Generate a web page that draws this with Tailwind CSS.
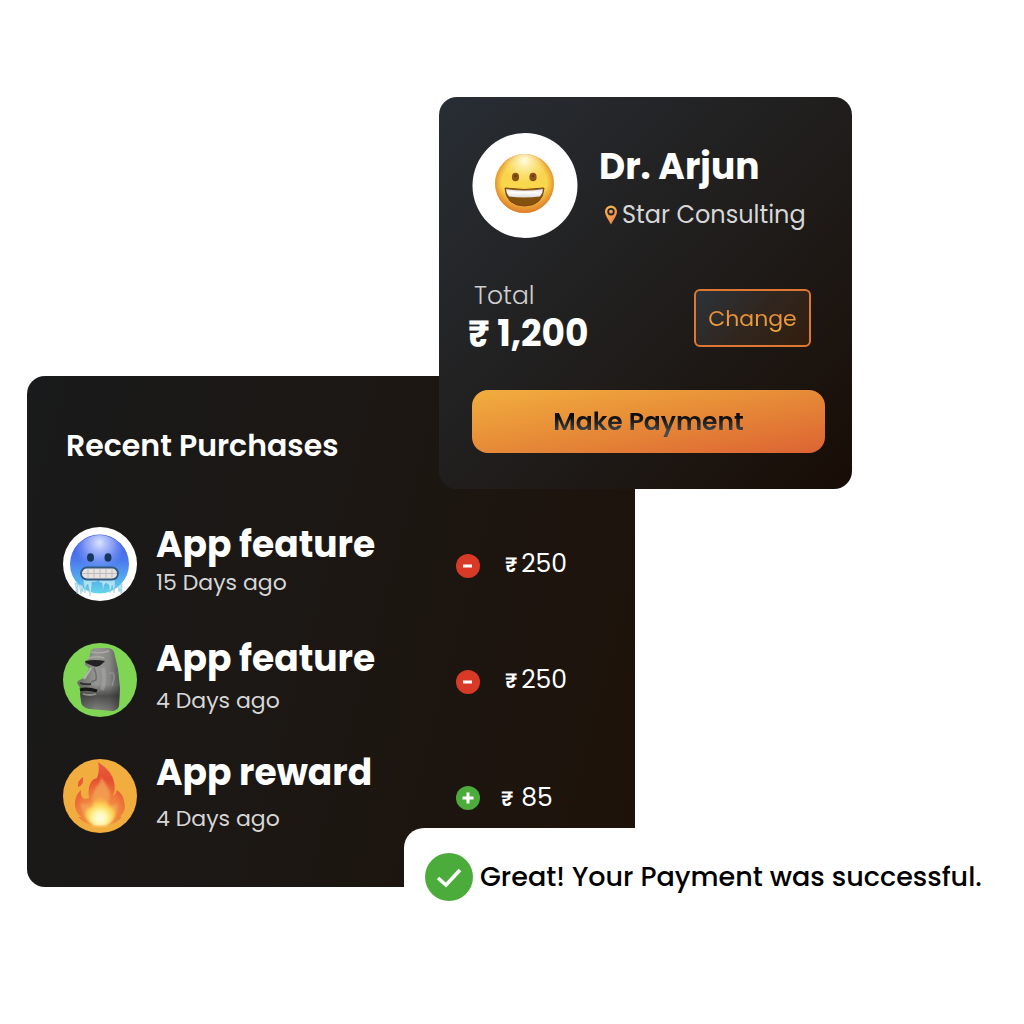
<!DOCTYPE html>
<html lang="en">
<head>
<meta charset="utf-8">
<meta name="viewport" content="width=device-width, initial-scale=1">
<title>Payments</title>
<script src="https://cdn.jsdelivr.net/npm/@tailwindcss/browser@4"></script>
</head>
<body class="min-h-screen bg-white font-[Poppins,Inter,sans-serif] text-white antialiased">
<main class="grid grid-cols-[minmax(0,27fr)_minmax(0,377fr)_minmax(0,35fr)_minmax(0,196fr)_minmax(0,217fr)_minmax(0,172fr)] grid-rows-[minmax(279px,auto)_minmax(113px,auto)_minmax(339px,auto)_minmax(59px,auto)_auto] pt-[97px]">

  <!-- Purchase history -->
  <section aria-labelledby="recent" class="col-start-2 col-end-5 row-start-2 row-end-5 rounded-l-[18px] bg-linear-105 from-[#191a1b] via-[#1c1713] to-[#1d1209] pt-12 pl-9">
    <h2 id="recent" class="pl-[3px] text-[30px] leading-[44px] font-semibold">Recent Purchases</h2>
    <ul class="mt-[53px] flex flex-col gap-[30px]">
      <li class="flex min-h-[86px] items-center">
        <svg class="size-[74px] shrink-0" viewBox="0 0 74 74" role="img" aria-label="Cold face">
          <defs>
            <linearGradient id="cold" x1="0" y1="0" x2="0" y2="1"><stop offset="0" stop-color="#3c53e2"/><stop offset=".45" stop-color="#4c7bee"/><stop offset=".8" stop-color="#55b4ee"/><stop offset="1" stop-color="#62d9ea"/></linearGradient>
            <radialGradient id="coldShine" cx=".5" cy=".14" r=".48"><stop offset="0" stop-color="#dce4ff"/><stop offset=".5" stop-color="#a3b4fa" stop-opacity=".75"/><stop offset="1" stop-color="#7896f7" stop-opacity="0"/></radialGradient>
            <linearGradient id="ice" x1="0" y1="0" x2="0" y2="1"><stop offset="0" stop-color="#9cdcf1"/><stop offset="1" stop-color="#dff4fb"/></linearGradient>
          </defs>
          <circle cx="37" cy="37" r="37" fill="#fff"/>
          <circle cx="36.500" cy="37" r="29.500" fill="url(#cold)"/>
          <circle cx="36.500" cy="36" r="28" fill="url(#coldShine)"/>
          <ellipse cx="27.500" cy="30.500" rx="3.500" ry="4.300" fill="#17375f"/>
          <ellipse cx="45" cy="30.500" rx="3.500" ry="4.300" fill="#17375f"/>
          <path d="M12 56l3 0 0 8-1 3zM16 57l4 2 0 6-1-3-1 5zM55 59l4-2 0 7-1 3-1-5-1 3z" fill="#b9e3f0" stroke="#6fb7d0" stroke-width=".4"/>
          <path d="M20 52h16q-1 3-4 3l-3 0-1 10-1 4-1-7-1-5-2 2-1 7-1-8zM35 52h17l0 6-1 8-1-6-1-2-2 8-1-8-3-2-2 2-1 7-1-9-3-1z" fill="url(#ice)" stroke="#69b4d2" stroke-width=".4"/>
          <rect x="18" y="40.500" width="37" height="12" rx="6" fill="#e7e3e1" stroke="#33567d" stroke-width="1.800"/>
          <path d="M19 46.500h35M25 41.500v10M31 41.500v10M37 41.500v10M43 41.500v10M49 41.500v10" stroke="#b5b1b5" stroke-width=".8"/>
        </svg>
        <div class="flex w-[300px] flex-col gap-2 pb-1.5 pl-[19px]">
          <h3 class="text-4xl leading-9 font-bold">App feature</h3>
          <p class="text-[22px] leading-6 text-[#d6d6d6]">15 Days ago</p>
        </div>
        <svg class="mt-1 ml-[19px] size-6 shrink-0" viewBox="0 0 24 24" role="img" aria-label="Debit"><circle cx="12" cy="12" r="12" fill="#d93a27"/><path d="M7 12h9" stroke="#fff" stroke-width="3"/></svg>
        <p class="ml-[25px] flex items-baseline gap-1 text-[25px] whitespace-nowrap"><span class="text-xl font-semibold">₹</span>250</p>
      </li>
      <li class="flex min-h-[86px] items-center">
        <svg class="size-[74px] shrink-0" viewBox="0 0 74 74" role="img" aria-label="Moai statue">
          <defs>
            <linearGradient id="stone" x1="0" y1="0" x2="1" y2="0"><stop offset="0" stop-color="#6b6b65"/><stop offset=".45" stop-color="#969692"/><stop offset=".75" stop-color="#868683"/><stop offset="1" stop-color="#535454"/></linearGradient>
            <linearGradient id="stoneShade" x1="0" y1="0" x2="0" y2="1"><stop offset=".58" stop-color="#222" stop-opacity="0"/><stop offset=".76" stop-color="#222" stop-opacity=".6"/><stop offset="1" stop-color="#222" stop-opacity=".15"/></linearGradient>
            <filter id="soft"><feGaussianBlur stdDeviation=".7"/></filter>
          </defs>
          <circle cx="37" cy="37" r="37" fill="#80d554"/>
          <path d="M28 7Q30 5 34 5L46 5Q50 6 51 9L55 26 57 45 56 63Q55 67 50 68L26 66Q18 64 18 58L17 50 18 46 16 43 14 40 15 38 22 34 26 25 22 22 22 19 26 16Z" fill="url(#stone)"/>
          <path d="M28 7Q30 5 34 5L46 5Q50 6 51 9L55 26 57 45 56 63Q55 67 50 68L26 66Q18 64 18 58L17 50 18 46 16 43 14 40 15 38 22 34 26 25 22 22 22 19 26 16Z" fill="url(#stoneShade)"/>
          <g filter="url(#soft)" fill="none">
            <path d="M22 18Q32 16 42 18L39 21Q35 25 30 23L23 20Z" fill="#222424"/>
            <path d="M28 9Q38 11 46 8M24 16Q33 12 41 15" stroke="#aaa9a3" stroke-width="1.500"/>
            <path d="M28 25L21 36" stroke="#b1b4b2" stroke-width="2"/>
            <path d="M31 25Q34 32 33 37L28 39" stroke="#6c6e6d" stroke-width="1.500"/>
            <path d="M17 40Q21 42 28 41" stroke="#303231" stroke-width="2"/>
            <path d="M17 47Q24 45 34 48" stroke="#151818" stroke-width="3.200"/>
            <path d="M20 51Q27 53 33 51" stroke="#8f8f8a" stroke-width="1.800"/>
            <path d="M46 31Q52 27 51 36L49 43" stroke="#a0a3a3" stroke-width="1.200" opacity=".7"/>
            <path d="M40 25Q43 38 39 47" stroke="#b0b0ab" stroke-width="4" opacity=".45"/>
          </g>
        </svg>
        <div class="flex w-[300px] flex-col gap-3 pb-1.5 pl-[19px]">
          <h3 class="text-4xl leading-9 font-bold">App feature</h3>
          <p class="text-[22px] leading-6 text-[#d6d6d6]">4 Days ago</p>
        </div>
        <svg class="mt-1 ml-[19px] size-6 shrink-0" viewBox="0 0 24 24" role="img" aria-label="Debit"><circle cx="12" cy="12" r="12" fill="#d93a27"/><path d="M7 12h9" stroke="#fff" stroke-width="3"/></svg>
        <p class="ml-[25px] flex items-baseline gap-1 text-[25px] whitespace-nowrap"><span class="text-xl font-semibold">₹</span>250</p>
      </li>
      <li class="flex min-h-[86px] items-center">
        <svg class="size-[74px] shrink-0" viewBox="0 0 74 74" role="img" aria-label="Fire">
          <defs>
            <radialGradient id="fire" gradientUnits="userSpaceOnUse" cx="37" cy="57" r="50"><stop offset="0" stop-color="#f6a23c"/><stop offset=".45" stop-color="#ef7c3d"/><stop offset=".75" stop-color="#e54d31"/><stop offset="1" stop-color="#ea5940"/></radialGradient>
            <radialGradient id="glow" gradientUnits="userSpaceOnUse" cx="37" cy="59" r="23"><stop offset="0" stop-color="#fffef0"/><stop offset=".3" stop-color="#fff6a6"/><stop offset=".6" stop-color="#ffd84f" stop-opacity=".85"/><stop offset="1" stop-color="#f7a03c" stop-opacity="0"/></radialGradient>
            <filter id="flameSoft"><feGaussianBlur stdDeviation="1.200"/></filter>
          </defs>
          <circle cx="37" cy="37" r="37" fill="#f1ae3f"/>
          <path d="M20 18Q14 22 15 28Q20 26 20 22Z" fill="#e95b37"/>
          <path d="M35 3Q49 12 51 23Q53 31 50 37Q53 35 54 31Q60 35 61 42Q64 51 57 58L59 58Q54 64 43 67L31 67Q20 64 15 58L18 58Q11 52 12 43Q13 35 18 31Q17 37 21 40L26 39Q25 34 26 28Q28 20 34 19Q37 11 35 3Z" fill="url(#fire)"/>
          <path d="M38 18Q43 25 46 31Q48 38 45 44Q48 48 54 44Q56 51 52 58Q46 66 37 66Q26 65 21 57Q18 50 18 44Q23 46 29 44Q29 35 34 27Q38 24 38 18Z" fill="#f3a257" opacity=".8" filter="url(#flameSoft)"/>
          <path d="M37 34Q42 39 46 47L52 49Q54 61 43 67L31 67Q20 60 23 50L29 48Q31 41 37 34Z" fill="url(#glow)" filter="url(#flameSoft)"/>
        </svg>
        <div class="flex w-[300px] flex-col gap-4 pb-1.5 pl-[19px]">
          <h3 class="text-4xl leading-9 font-bold">App reward</h3>
          <p class="text-[22px] leading-6 text-[#d6d6d6]">4 Days ago</p>
        </div>
        <svg class="mt-1 ml-[19px] size-6 shrink-0" viewBox="0 0 24 24" role="img" aria-label="Credit"><circle cx="12" cy="12" r="12" fill="#4cac3b"/><path d="M6.500 12h11M12 6.500v11" stroke="#fff" stroke-width="3"/></svg>
        <p class="ml-[21px] flex items-baseline gap-2 pt-1 text-[25px] whitespace-nowrap"><span class="text-xl font-semibold">₹</span>85</p>
      </li>
    </ul>
  </section>

  <!-- Payment card -->
  <section aria-label="Payment" class="z-10 col-start-4 col-end-6 row-start-1 row-end-3 flex flex-col rounded-[18px] bg-linear-135 from-[#282e35] via-[#201e1d] via-50% to-[#180d06] pt-9 pr-[27px] pb-9 pl-[33px]">
    <header class="flex items-start gap-[21px]">
      <svg class="size-[106px] shrink-0" viewBox="0 0 106 106" role="img" aria-label="Grinning face">
        <defs>
          <linearGradient id="sun" x1="0" y1="0" x2="0" y2="1"><stop offset="0" stop-color="#f6cd4c"/><stop offset=".55" stop-color="#f9d84c"/><stop offset="1" stop-color="#e69532"/></linearGradient>
          <radialGradient id="sunEdge" cx=".5" cy=".48" r=".52"><stop offset=".72" stop-color="#e78f2d" stop-opacity="0"/><stop offset="1" stop-color="#dd7b28" stop-opacity=".9"/></radialGradient>
          <radialGradient id="sunShine" cx=".5" cy=".12" r=".42"><stop offset="0" stop-color="#fffde0"/><stop offset="1" stop-color="#fff29b" stop-opacity="0"/></radialGradient>
          <linearGradient id="teeth" x1="0" y1="0" x2="0" y2="1"><stop offset="0" stop-color="#d5d6da"/><stop offset=".4" stop-color="#fff"/><stop offset="1" stop-color="#dcdcdf"/></linearGradient>
        </defs>
        <circle cx="53" cy="52.500" r="52.500" fill="#fff"/>
        <circle cx="52.500" cy="50.500" r="29.500" fill="url(#sun)"/>
        <circle cx="52.500" cy="50.500" r="29.500" fill="url(#sunEdge)"/>
        <circle cx="52.500" cy="48" r="27" fill="url(#sunShine)"/>
        <ellipse cx="43.500" cy="44" rx="3.600" ry="4.300" fill="#8a5218"/><ellipse cx="61" cy="44" rx="3.600" ry="4.300" fill="#8a5218"/>
        <circle cx="43.500" cy="43" r="1.300" fill="#6a3b10"/><circle cx="61" cy="43" r="1.300" fill="#6a3b10"/>
        <path d="M33 55Q52 58 72 55Q71 72.500 52.500 73Q34 72.500 33 55Z" fill="#85510f" stroke="#7b4511"/>
        <path d="M34 56Q52 59 71 56Q71 60 68 63.500Q52 65.500 37 63.500Q34 60 34 56Z" fill="url(#teeth)"/>
      </svg>
      <div class="pt-3">
        <h1 class="text-4xl leading-[44px] font-bold whitespace-nowrap">Dr. Arjun</h1>
        <p class="mt-2 flex items-center gap-1 pl-[5px] text-2xl leading-9 whitespace-nowrap text-[#d6d6d6]">
          <svg class="h-5 w-[14px]" viewBox="0 0 14 20" aria-hidden="true">
            <defs><linearGradient id="pin" x1="0" y1="0" x2=".6" y2="1"><stop offset="0" stop-color="#f5bd48"/><stop offset="1" stop-color="#f08650"/></linearGradient></defs>
            <path fill="url(#pin)" fill-rule="evenodd" d="M7 0.500a6 6 0 0 0-6 6c0 4 3.500 8 6 13 2.500-5 6-9 6-13a6 6 0 0 0-6-6zM7 3a3.700 3.700 0 1 1 0 7.400 3.700 3.700 0 0 1 0-7.400z"/><circle cx="7" cy="6.700" r="1.900" fill="url(#pin)"/>
          </svg>Star Consulting</p>
      </div>
    </header>
    <div class="mt-[39px] flex items-start justify-between pr-[14px]">
      <dl>
        <dt class="pl-0.5 text-[25px] leading-9 font-light text-[#cfcfcf]">Total</dt>
        <dd class="-ml-1 text-4xl leading-10 font-bold whitespace-nowrap">₹ 1,200</dd>
      </dl>
      <button type="button" class="mt-[11px] h-[58px] w-[117px] rounded-md border-2 border-[#dd7834] bg-linear-135 from-[#2b323a] via-[#30261f] to-[#331d0c] text-[22px]"><span class="bg-linear-to-b from-[#df7934] to-[#f2b142] bg-clip-text text-transparent">Change</span></button>
    </div>
    <button type="button" class="mt-9 h-[63px] rounded-2xl bg-linear-170 from-[#f2ae3e] via-[#e68a37] to-[#dc6333] text-[25px] font-semibold"><span class="bg-linear-to-b from-[#0b0b0c] from-35% to-[#464c52] to-80% bg-clip-text text-transparent">Make Payment</span></button>
  </section>

  <!-- Confirmation toast -->
  <div role="status" class="z-20 col-start-3 col-end-7 row-start-4 row-end-6 flex items-center gap-[7px] rounded-tl-[20px] bg-white py-[25px] pl-[21px] text-black">
    <svg class="size-12 shrink-0" viewBox="0 0 48 48" aria-hidden="true"><circle cx="24" cy="24" r="24" fill="#4cac3b"/><path d="M13 25l8 7L35 17" fill="none" stroke="#fff" stroke-width="3.600"/></svg>
    <p class="text-[27px] leading-9 font-medium whitespace-nowrap">Great! Your Payment was successful.</p>
  </div>
</main>
</body>
</html>
